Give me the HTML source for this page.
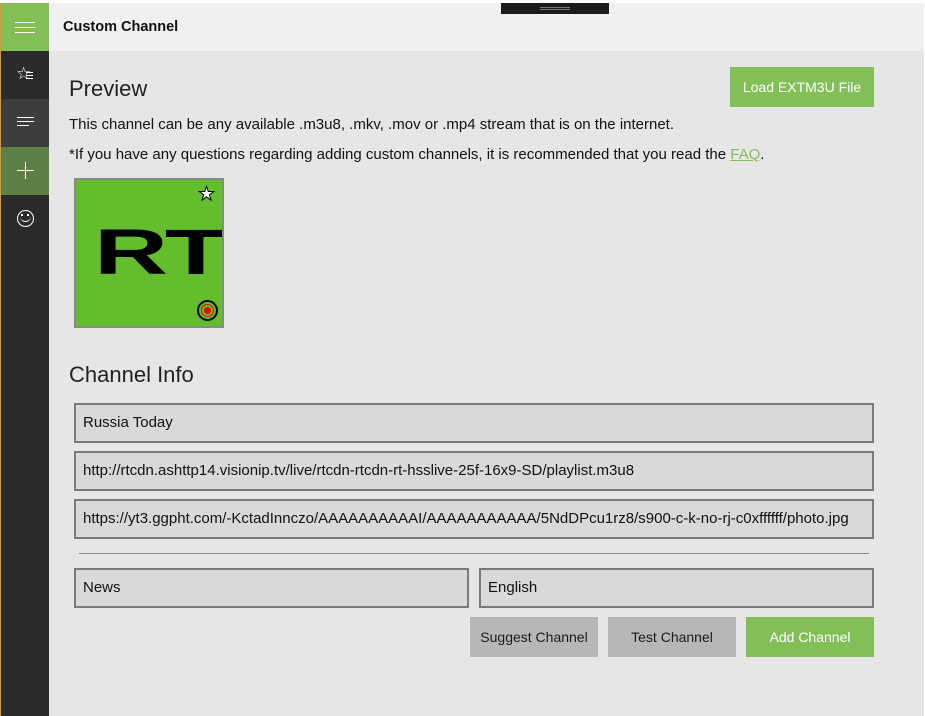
<!DOCTYPE html>
<html><head><meta charset="utf-8"><style>
*{margin:0;padding:0;box-sizing:border-box}
body{width:925px;height:716px;background:#fff;position:relative;overflow:hidden;font-family:"Liberation Sans",sans-serif;color:#111}
.a{position:absolute}
.side{left:0;top:3px;width:49px;height:713px;background:#2b2b2b;border-left:1px solid #d49a3a}
.main{left:49px;top:3px;width:875px;height:713px;background:#e6e6e6}
.top{left:49px;top:3px;width:875px;height:48px;background:#f0f0f0}
.f{position:absolute;border:2px solid #7a7a7a;background:#d9d9d9;height:40px;font-size:15px;line-height:36px;padding-left:7px;white-space:nowrap;overflow:hidden}
.b{position:absolute;height:40px;top:617px;font-size:14px;line-height:40px;text-align:center;background:#b7b7b7;color:#1a1a1a}
.t{font-size:15px;position:absolute;left:69px;white-space:nowrap}
</style></head><body>
<div class="a side"></div>
<div class="a" style="left:1px;top:3px;width:48px;height:48px;background:#82bf56"></div>
<div class="a" style="left:15px;top:22px;width:20px;height:1px;background:#fff;box-shadow:0 5px 0 #fff,0 10px 0 #fff"></div>
<div class="a" style="left:1px;top:99px;width:48px;height:48px;background:#3d3d3d"></div>
<div class="a" style="left:1px;top:147px;width:48px;height:48px;background:#5e7f45"></div>
<div class="a" style="left:16px;top:64px;color:#fff;font-size:17px">☆</div>
<div class="a" style="left:26px;top:72px;width:7px;height:1px;background:#fff;box-shadow:0 3px 0 #fff,0 6px 0 #fff"></div>
<div class="a" style="left:17px;top:117px;width:17px;height:1px;background:#fff;box-shadow:0 4px 0 #fff"></div>
<div class="a" style="left:17px;top:125px;width:12px;height:1px;background:#fff"></div>
<div class="a" style="left:17px;top:170px;width:17px;height:1px;background:#fff"></div>
<div class="a" style="left:25px;top:162px;width:1px;height:17px;background:#fff"></div>
<div class="a" style="left:17px;top:210px;width:17px;height:17px;border:1.5px solid #fff;border-radius:50%"></div>
<div class="a" style="left:21px;top:214px;width:2px;height:2px;background:#fff;box-shadow:6px 0 0 #fff"></div>
<div class="a" style="left:20px;top:216px;width:11px;height:6px;border-bottom:1.5px solid #fff;border-radius:0 0 6px 6px"></div>
<div class="a main"></div>
<div class="a top"></div>
<div class="a" style="left:501px;top:3px;width:108px;height:11px;background:#1a1a1a"></div>
<div class="a" style="left:540px;top:7px;width:30px;height:1px;background:#777;box-shadow:0 2px 0 #777"></div>
<div class="a" style="left:63px;top:19px;font-size:14.5px;font-weight:bold">Custom Channel</div>
<div class="a" style="left:69px;top:76px;font-size:22px;color:#222">Preview</div>
<div class="a" style="left:730px;top:67px;width:144px;height:40px;background:#82bf56;color:#fff;font-size:14px;line-height:40px;text-align:center">Load EXTM3U File</div>
<div class="t" style="top:116px">This channel can be any available .m3u8, .mkv, .mov or .mp4 stream that is on the internet.</div>
<div class="t" style="top:146px">*If you have any questions regarding adding custom channels, it is recommended that you read the <span style="color:#82bf56;text-decoration:underline">FAQ</span>.</div>
<div class="a" style="left:74px;top:178px;width:150px;height:150px;border:2px solid #888;background:#63bd2d;overflow:hidden">
<div class="a" style="left:18px;top:40px;font-size:64px;font-weight:900;line-height:1;letter-spacing:-2px;transform:scaleX(1.6);transform-origin:left;color:#000">RT</div>
<div class="a" style="left:122px;top:3px;font-size:19px;color:#fff;-webkit-text-stroke:1px #000">★</div>
<div class="a" style="left:121px;top:120px;width:21px;height:21px;border:2px solid #000;border-radius:50%;background:#63bd2d"><div class="a" style="left:2px;top:2px;width:13px;height:13px;border:1.5px solid #e00;border-radius:50%"></div><div class="a" style="left:5px;top:5px;width:7px;height:7px;background:#f00;border-radius:50%"></div></div>
</div>
<div class="a" style="left:69px;top:362px;font-size:22px;color:#222">Channel Info</div>
<div class="f" style="left:74px;top:403px;width:800px">Russia Today</div>
<div class="f" style="left:74px;top:451px;width:800px">http://rtcdn.ashttp14.visionip.tv/live/rtcdn-rtcdn-rt-hsslive-25f-16x9-SD/playlist.m3u8</div>
<div class="f" style="left:74px;top:499px;width:800px">https://yt3.ggpht.com/-KctadInnczo/AAAAAAAAAAI/AAAAAAAAAAA/5NdDPcu1rz8/s900-c-k-no-rj-c0xffffff/photo.jpg</div>
<div class="a" style="left:79px;top:553px;width:790px;height:1px;background:#888"></div>
<div class="f" style="left:74px;top:568px;width:395px">News</div>
<div class="f" style="left:479px;top:568px;width:395px">English</div>
<div class="b" style="left:470px;width:128px">Suggest Channel</div>
<div class="b" style="left:608px;width:128px">Test Channel</div>
<div class="b" style="left:746px;width:128px;background:#82bf56;color:#fff">Add Channel</div>
</body></html>
